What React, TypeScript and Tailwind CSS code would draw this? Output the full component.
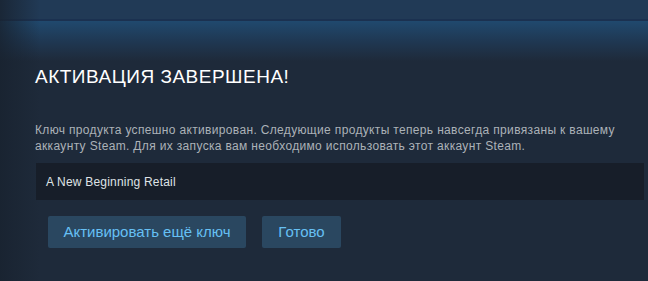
export default function App() {
  return (
    <div className="relative w-[648px] h-[281px] overflow-hidden bg-[#1e2a3a] font-['Liberation_Sans',Arial,sans-serif]">
      {/* top header band */}
      <div className="h-[19px] bg-[#213a56]" />
      <div className="h-[2px] bg-[#1b3150]" />
      <div className="h-[40px] bg-gradient-to-b from-[#20496e] via-[#1f3853] to-[#1e2a3a]" />
      {/* left vignette */}
      <div className="absolute left-0 top-0 h-full w-[40px] bg-gradient-to-r from-[#18222f]/80 to-transparent pointer-events-none" />

      <div className="relative pl-[35px]">
        <h1 className="mt-[4px] text-[19px] leading-[24px] tracking-[0.5px] text-white">АКТИВАЦИЯ ЗАВЕРШЕНА!</h1>
        <p className="mt-[33px] text-[12px] leading-[16px] tracking-[0.34px] text-[#acb2b8]">
          Ключ продукта успешно активирован. Следующие продукты теперь навсегда привязаны к вашему
          <br />
          аккаунту Steam. Для их запуска вам необходимо использовать этот аккаунт Steam.
        </p>
        <div className="mt-[9px] ml-px w-[608px] h-[37px] bg-[#171e29] flex items-center pl-[10px] text-[12px] tracking-[0.2px] text-[#dfe3e6]">
          A New Beginning Retail
        </div>
        <div className="mt-[16px] ml-[13px] flex gap-[16px]">
          <button className="h-[32px] w-[198px] bg-[#2a4760] text-[15px] text-[#66c0f4] rounded-[2px]">
            Активировать ещё ключ
          </button>
          <button className="h-[32px] w-[79px] bg-[#2a4760] text-[15px] text-[#66c0f4] rounded-[2px]">
            Готово
          </button>
        </div>
      </div>
    </div>
  )
}
